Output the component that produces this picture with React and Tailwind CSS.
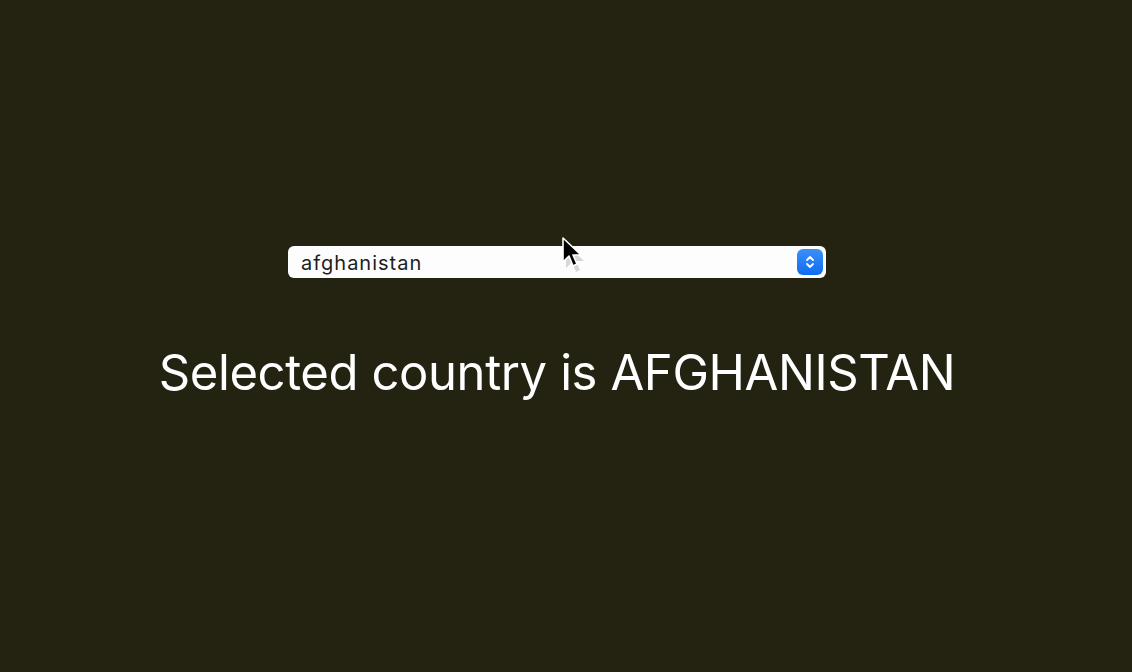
import React from "react";

export default function App() {
  return (
    <div className="relative min-h-[672px] w-full bg-[#242312] overflow-hidden" style={{ fontFamily: "Inter, 'Noto Sans', sans-serif" }}>
      <div className="flex flex-col items-center pt-[246px] pr-[18px]">
        <div className="flex h-[32px] w-[538px] items-center justify-between rounded-[6px] bg-[#fdfdfd] pl-[13px] pr-[3px]">
          <span className="pt-[2px] text-[20px] leading-none text-[#1d1d1f] tracking-[1px]">afghanistan</span>
          <div className="flex h-[26px] w-[26px] items-center justify-center rounded-[6px] bg-gradient-to-b from-[#3b8ff7] to-[#0a6cf0]">
            <svg width="12" height="16" viewBox="0 0 12 16" fill="none" stroke="white" strokeWidth="1.8" strokeLinecap="round" strokeLinejoin="round">
              <path d="M3 6 L6 3 L9 6" />
              <path d="M3 10 L6 13 L9 10" />
            </svg>
          </div>
        </div>
        <h1 className="mt-[65px] text-[49px] leading-[60px] font-normal text-white tracking-[-0.4px]">Selected country is AFGHANISTAN</h1>
      </div>
      <svg className="absolute left-[561px] top-[236px]" width="24" height="40" viewBox="0 0 24 40">
        <path d="M4 6 L4 30 L10 24 L14 34 L18 32 L14 23 L22 23 Z" fill="rgba(0,0,0,0.15)" transform="translate(1,2)" />
        <path d="M2 2 L2 26 L8 20 L12 30 L16 28 L12 19 L20 19 Z" fill="black" stroke="white" strokeWidth="1.6" strokeLinejoin="round" />
      </svg>
    </div>
  );
}
